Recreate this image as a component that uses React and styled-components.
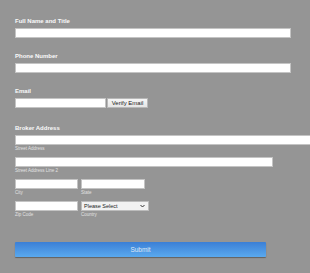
import React from "react";
import styled, { createGlobalStyle } from "styled-components";

const GlobalStyle = createGlobalStyle`
  html, body {
    margin: 0;
    padding: 0;
    background: #959595;
    overflow: hidden;
  }
  body {
    font-family: "Liberation Sans", Arial, sans-serif;
  }
`;

const Form = styled.form`
  display: flex;
  flex-direction: column;
  padding: 18px 0 0 15px;
  width: 310px;
  height: 273px;
  box-sizing: border-box;
`;

const Section = styled.div`
  display: flex;
  flex-direction: column;
  margin-top: ${({ gap }) => gap || 0}px;
`;

const Label = styled.div`
  height: 7px;
  line-height: 7px;
  font-size: 6px;
  font-weight: bold;
  color: #fafafa;
  margin-bottom: 3px;
  white-space: nowrap;
`;

const Input = styled.div`
  box-sizing: border-box;
  height: 10px;
  width: ${({ w }) => w}px;
  background: #fff;
  border: 1px solid #c4c4c4;
  flex-shrink: 0;
`;

const Row = styled.div`
  display: flex;
  gap: ${({ gap }) => gap || 0}px;
`;

const Col = styled.div`
  display: flex;
  flex-direction: column;
`;

const SubLabel = styled.div`
  height: 6px;
  line-height: 6px;
  margin-top: 1px;
  margin-bottom: ${({ mb }) => mb || 0}px;
  font-size: 4.5px;
  color: #e2e2e2;
  white-space: nowrap;
`;

const VerifyButton = styled.div`
  box-sizing: border-box;
  width: 41px;
  height: 10px;
  margin-left: 1px;
  background: linear-gradient(#f6f6f6, #e6e6e6);
  border: 1px solid #b8b8b8;
  font-size: 6px;
  line-height: 8px;
  text-align: center;
  color: #222;
`;

const Select = styled.div`
  box-sizing: border-box;
  width: 68px;
  height: 10px;
  display: flex;
  align-items: center;
  justify-content: space-between;
  padding: 0 3px 0 2px;
  background: #f2f2f2;
  border: 1px solid #bcbcbc;
  font-size: 5.5px;
  color: #222;
`;

const SubmitButton = styled.div`
  margin-top: 24px;
  width: 251px;
  height: 15px;
  border-radius: 1px;
  background: linear-gradient(#3b7fd6, #5aa9ee);
  box-shadow: 0 1px 1px rgba(0, 0, 0, 0.35);
  color: #dfe8f6;
  font-size: 6.5px;
  line-height: 15px;
  text-align: center;
`;

export default function App() {
  return (
    <>
      <GlobalStyle />
      <Form>
        <Section>
          <Label>Full Name and Title</Label>
          <Input w={276} />
        </Section>
        <Section gap={15}>
          <Label>Phone Number</Label>
          <Input w={276} />
        </Section>
        <Section gap={15}>
          <Label>Email</Label>
          <Row>
            <Input w={91} />
            <VerifyButton>Verify Email</VerifyButton>
          </Row>
        </Section>
        <Section gap={17}>
          <Label>Broker Address</Label>
          <Input w={300} />
          <SubLabel mb={5}>Street Address</SubLabel>
          <Input w={258} />
          <SubLabel mb={5}>Street Address Line 2</SubLabel>
          <Row gap={3}>
            <Col>
              <Input w={63} />
              <SubLabel mb={5}>City</SubLabel>
            </Col>
            <Col>
              <Input w={64} />
              <SubLabel mb={5}>State</SubLabel>
            </Col>
          </Row>
          <Row gap={3}>
            <Col>
              <Input w={63} />
              <SubLabel>Zip Code</SubLabel>
            </Col>
            <Col>
              <Select>
                <span>Please Select</span>
                <svg width="5" height="4" viewBox="0 0 10 8">
                  <path d="M1 2 L5 6 L9 2" fill="none" stroke="#333" strokeWidth="2" />
                </svg>
              </Select>
              <SubLabel>Country</SubLabel>
            </Col>
          </Row>
        </Section>
        <SubmitButton>Submit</SubmitButton>
      </Form>
    </>
  );
}
